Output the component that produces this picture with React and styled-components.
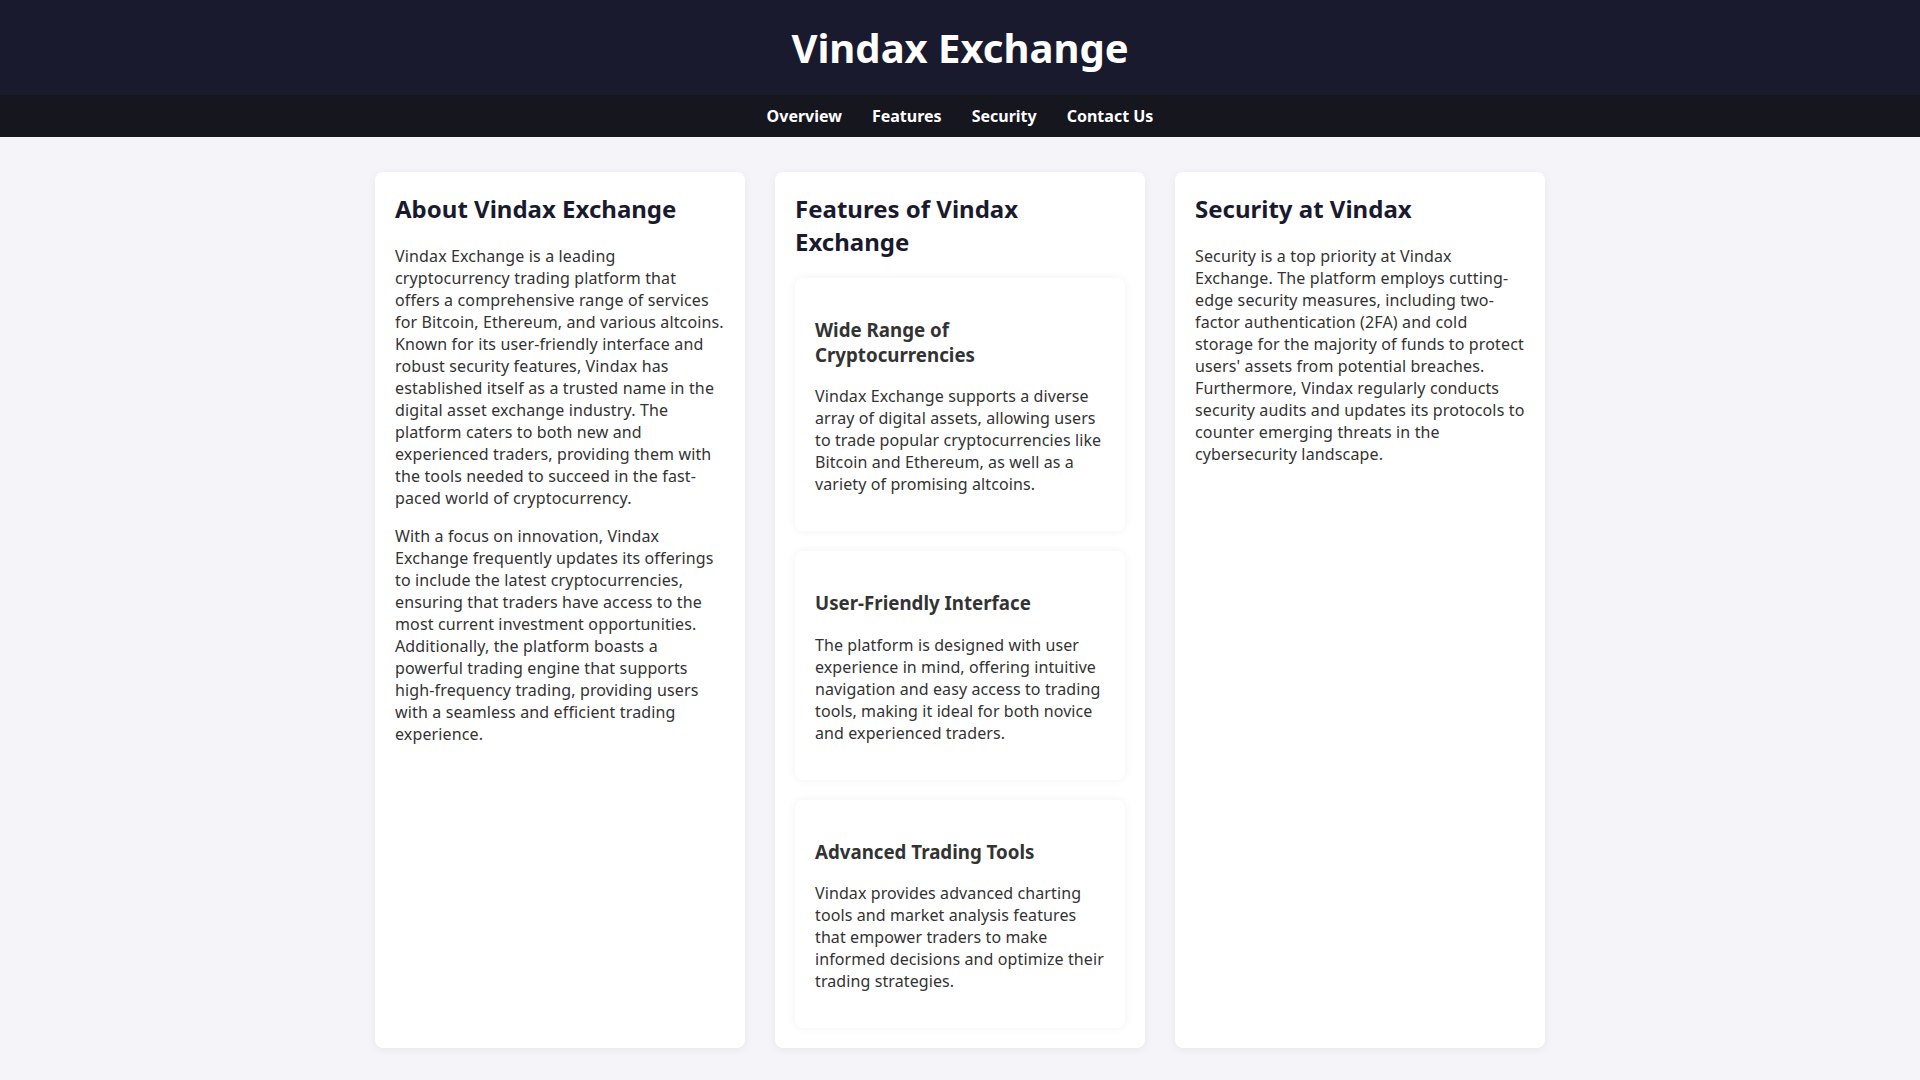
import React from 'react';
import styled, { createGlobalStyle } from 'styled-components';

const GlobalStyle = createGlobalStyle`
  body {
    margin: 0;
    font-family: 'Noto Sans', 'Open Sans', sans-serif;
    background: #f4f4f9;
    color: #333;
  }
`;

const Header = styled.header`
  background: #1a1a2e;
  color: #fff;
  text-align: center;
  padding: 20px 0;
`;

const Title = styled.h1`
  margin: 0;
  font-size: 40px;
  font-weight: 700;
`;

const Nav = styled.nav`
  background: #16161f;
  display: flex;
  justify-content: center;
  padding: 10px 0;
`;

const NavLink = styled.a`
  color: #fff;
  font-weight: 700;
  font-size: 16px;
  margin: 0 15px;
  text-decoration: none;
  cursor: pointer;
`;

const Main = styled.main`
  max-width: 1170px;
  margin: 0 auto;
  padding: 35px 0 33px;
  display: grid;
  grid-template-columns: repeat(3, 1fr);
  gap: 30px;
`;

const Card = styled.section`
  background: #fff;
  border-radius: 8px;
  padding: 20px;
  box-shadow: 0 2px 10px rgba(0, 0, 0, 0.06);
`;

const CardTitle = styled.h2`
  margin: 0 0 0.83em;
  font-size: 24px;
  color: #1a1a2e;
`;

const Text = styled.p`
  margin: 16px 0;
  font-size: 16px;
  letter-spacing: ${(p) => (p.$tight ? '0.1px' : '0.14px')};
  &:last-child {
    margin-bottom: 0;
  }
`;

const Feature = styled.div`
  background: #fff;
  border-radius: 8px;
  padding: 20px;
  margin-top: 20px;
  box-shadow: 0 0 10px rgba(0, 0, 0, 0.06);
  p:last-child {
    margin-bottom: 16px;
  }
`;

const FeatureTitle = styled.h3`
  margin: 18.72px 0;
  font-size: 18.72px;
  color: #333;
`;

const features = [
  {
    title: 'Wide Range of Cryptocurrencies',
    text: 'Vindax Exchange supports a diverse array of digital assets, allowing users to trade popular cryptocurrencies like Bitcoin and Ethereum, as well as a variety of promising altcoins.',
  },
  {
    title: 'User-Friendly Interface',
    text: 'The platform is designed with user experience in mind, offering intuitive navigation and easy access to trading tools, making it ideal for both novice and experienced traders.',
  },
  {
    title: 'Advanced Trading Tools',
    text: 'Vindax provides advanced charting tools and market analysis features that empower traders to make informed decisions and optimize their trading strategies.',
  },
];

export default function App() {
  return (
    <>
      <GlobalStyle />
      <Header>
        <Title>Vindax Exchange</Title>
      </Header>
      <Nav>
        <NavLink>Overview</NavLink>
        <NavLink>Features</NavLink>
        <NavLink>Security</NavLink>
        <NavLink>Contact Us</NavLink>
      </Nav>
      <Main>
        <Card id="overview">
          <CardTitle>About Vindax Exchange</CardTitle>
          <Text>
            Vindax Exchange is a leading cryptocurrency trading platform that offers a comprehensive range of
            services for Bitcoin, Ethereum, and various altcoins. Known for its user-friendly interface and robust
            security features, Vindax has established itself as a trusted name in the digital asset exchange
            industry. The platform caters to both new and experienced traders, providing them with the tools needed
            to succeed in the fast-paced world of cryptocurrency.
          </Text>
          <Text>
            With a focus on innovation, Vindax Exchange frequently updates its offerings to include the latest
            cryptocurrencies, ensuring that traders have access to the most current investment opportunities.
            Additionally, the platform boasts a powerful trading engine that supports high-frequency trading,
            providing users with a seamless and efficient trading experience.
          </Text>
        </Card>
        <Card id="features">
          <CardTitle>Features of Vindax Exchange</CardTitle>
          {features.map((f) => (
            <Feature key={f.title}>
              <FeatureTitle>{f.title}</FeatureTitle>
              <Text $tight>{f.text}</Text>
            </Feature>
          ))}
        </Card>
        <Card id="security">
          <CardTitle>Security at Vindax</CardTitle>
          <Text>
            Security is a top priority at Vindax Exchange. The platform employs cutting-edge security measures,
            including two-factor authentication (2FA) and cold storage for the majority of funds to protect users'
            assets from potential breaches. Furthermore, Vindax regularly conducts security audits and updates its
            protocols to counter emerging threats in the cybersecurity landscape.
          </Text>
        </Card>
      </Main>
    </>
  );
}
